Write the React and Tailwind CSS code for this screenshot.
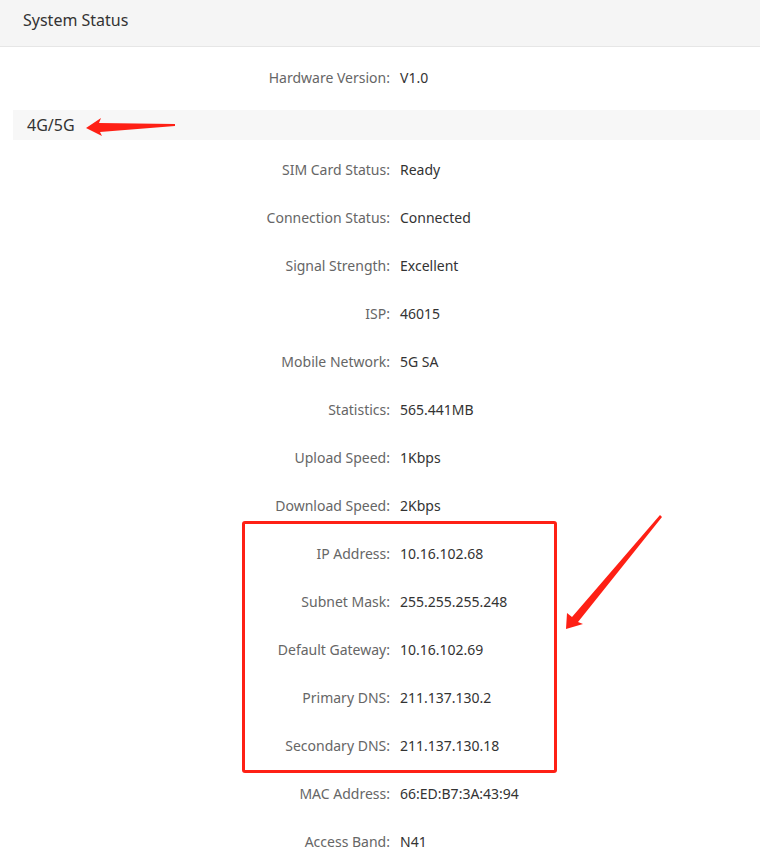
import React from 'react';

const rows4g = [
  ['SIM Card Status', 'Ready'],
  ['Connection Status', 'Connected'],
  ['Signal Strength', 'Excellent'],
  ['ISP', '46015'],
  ['Mobile Network', '5G SA'],
  ['Statistics', '565.441MB'],
  ['Upload Speed', '1Kbps'],
  ['Download Speed', '2Kbps'],
  ['IP Address', '10.16.102.68'],
  ['Subnet Mask', '255.255.255.248'],
  ['Default Gateway', '10.16.102.69'],
  ['Primary DNS', '211.137.130.2'],
  ['Secondary DNS', '211.137.130.18'],
  ['MAC Address', '66:ED:B7:3A:43:94'],
  ['Access Band', 'N41'],
];

function Row({ label, value }) {
  return (
    <div className="flex items-center h-[48px] text-[14px]">
      <div className="w-[390px] shrink-0 text-right text-[#666]">{label}:</div>
      <div className="pl-[10px] text-[#333]">{value}</div>
    </div>
  );
}

export default function App() {
  return (
    <div className="relative w-[760px] h-[861px] overflow-hidden bg-white" style={{ fontFamily: '"Noto Sans", "Open Sans", sans-serif' }}>
      <div className="h-[47px] bg-[#f5f5f5] border-b border-[#e6e6e6] pl-[23px] pt-[8px] text-[16px] text-[#333]">
        System Status
      </div>
      <div className="pt-[6px]">
        <Row label="Hardware Version" value="V1.0" />
      </div>
      <div className="mt-[9px] ml-[13px] h-[30px] bg-[#f7f7f7] flex items-center pl-[14px] text-[16px] text-[#333]">
        4G/5G
      </div>
      <div className="pt-[5px]">
        {rows4g.map((r, i) => (
          <Row key={i} label={r[0]} value={r[1]} />
        ))}
      </div>

      {/* annotation overlay */}
      <div className="absolute left-[242px] top-[521px] w-[315px] h-[252px] border-[3px] border-[#fe2015] rounded-[3px]" />
      <svg className="absolute left-0 top-0 pointer-events-none" width="760" height="861">
        <polygon fill="#fe2015" points="86,128 101,118 99,123 175,124 175,126 100,132 102,136" />
        <polygon fill="#fe2015" points="566,629 567,613 572,617 660,515 662,517 578,622 583,624" />
      </svg>
    </div>
  );
}
